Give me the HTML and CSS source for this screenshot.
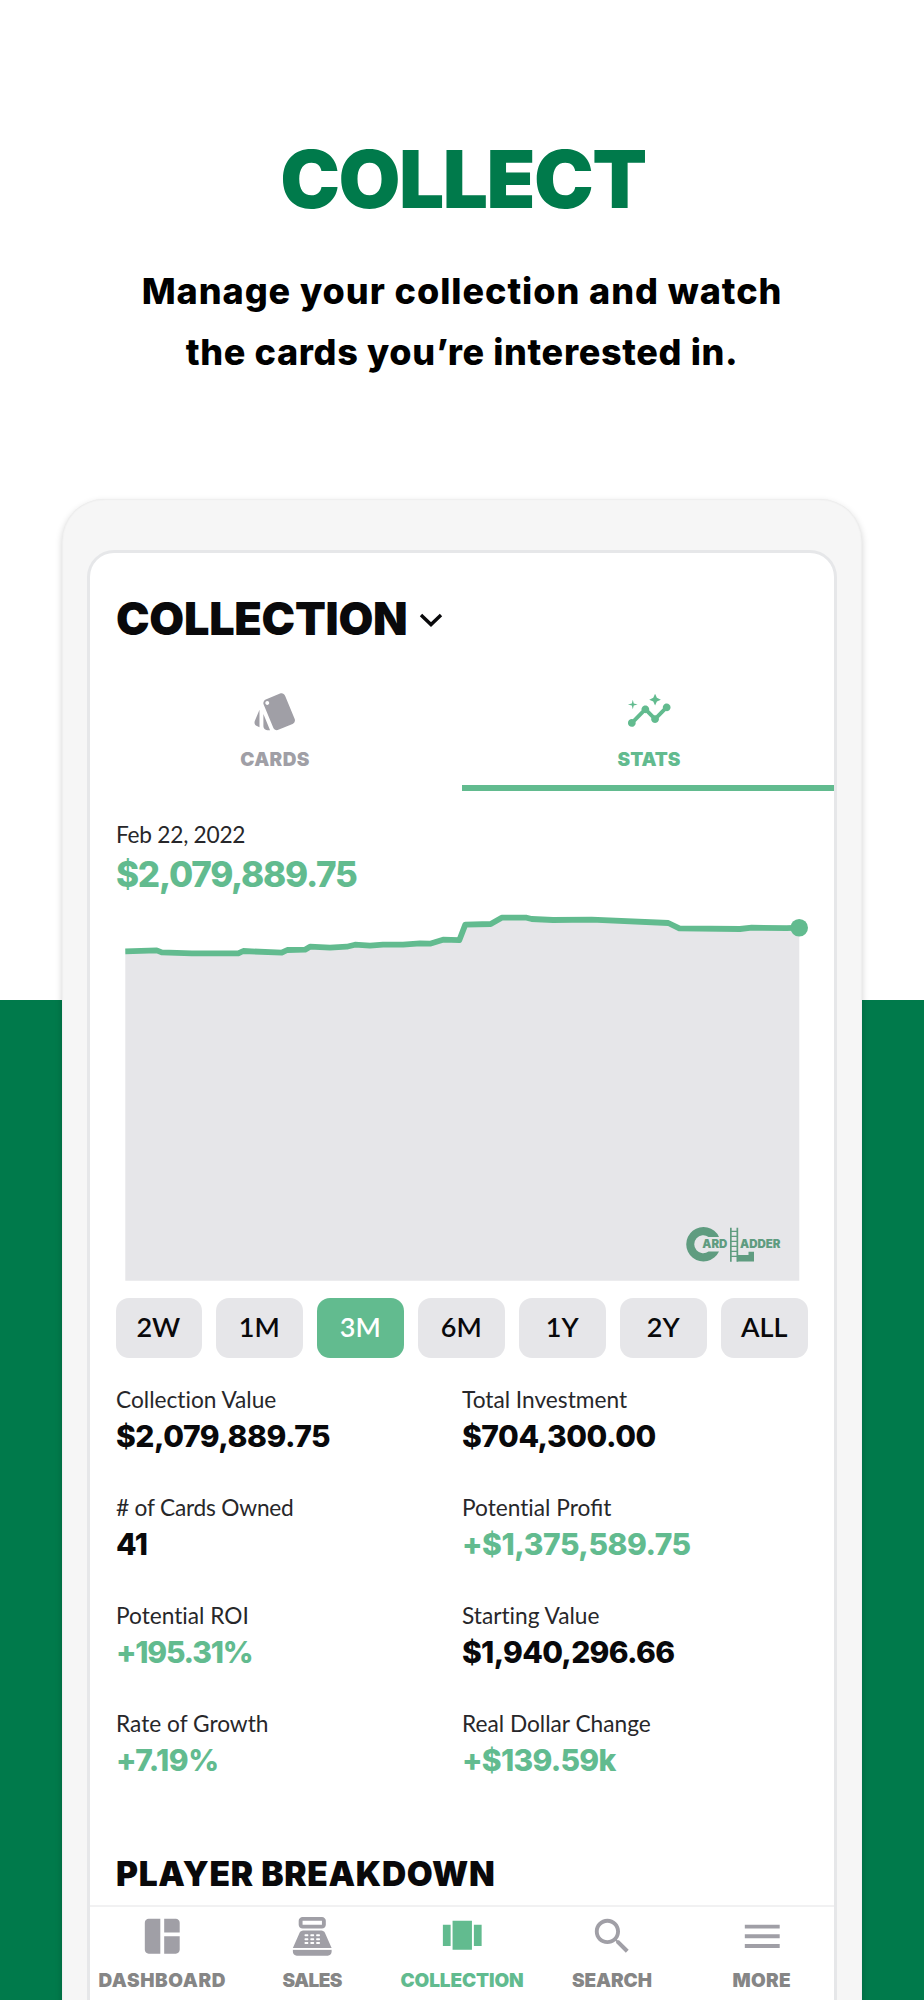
FILE: index.html
```html
<!DOCTYPE html>
<html lang="en">
<head>
<meta charset="utf-8">
<title>Collect</title>
<link rel="stylesheet" href="styles.css">
</head>
<body>
<main class="page">
  <header class="hero">
    <h1 class="hero-title">COLLECT</h1>
    <p class="hero-text"><span class="line-one">Manage your collection and watch</span><br><span class="line-two">the cards you’re interested in.</span></p>
  </header>

  <div class="device">
    <div class="screen">
      <div class="title">
        <h2 class="title-text">COLLECTION</h2>
        <svg class="chevron" viewBox="0 0 24 14"><path d="M2 2l10 9.6L22 2" fill="none" stroke="currentColor" stroke-width="3.4"/></svg>
      </div>

      <div class="tabs">
        <div class="tab cards">
          <svg class="icon" viewBox="0 0 24 24"><path d="M2.53 19.65l1.34.56v-9.03l-2.43 5.86c-.41 1.02.08 2.19 1.09 2.61zm19.5-3.7L17.07 3.98c-.31-.75-1.04-1.21-1.81-1.23-.26 0-.53.04-.79.15L7.1 5.95c-.75.31-1.21 1.03-1.23 1.8-.01.27.04.54.15.8l4.96 11.97c.31.76 1.05 1.22 1.83 1.23.26 0 .52-.05.77-.15l7.36-3.05c1.02-.42 1.51-1.59 1.09-2.6zM7.88 8.75c-.55 0-1-.45-1-1s.45-1 1-1 1 .45 1 1-.45 1-1 1zm-2 11c0 1.1.9 2 2 2h1.45l-3.45-8.34v6.34z"/></svg>
          <span class="tab-label spaced">CARDS</span>
        </div>
        <div class="tab active">
          <svg class="icon" viewBox="0 0 24 24"><path d="M21 8c-1.45 0-2.26 1.44-1.93 2.51l-3.55 3.56c-.3-.09-.74-.09-1.04 0l-2.55-2.55C12.27 10.45 11.46 9 10 9c-1.45 0-2.27 1.44-1.93 2.52l-4.56 4.55C2.44 15.74 1 16.55 1 18c0 1.1.9 2 2 2 1.45 0 2.26-1.44 1.93-2.51l4.55-4.56c.3.09.74.09 1.04 0l2.55 2.55C12.73 16.55 13.54 18 15 18c1.45 0 2.27-1.44 1.93-2.52l3.56-3.55C21.56 12.26 23 11.45 23 10c0-1.1-.9-2-2-2z"/><path d="M15 9l.94-2.07L18 6l-2.06-.93L15 3l-.92 2.07L12 6l2.08.93zM3.5 11L4 9l2-.5L4 8l-.5-2L3 8l-2 .5L3 9z"/></svg>
          <span class="tab-label">STATS</span>
        </div>
      </div>

      <div class="date">Feb 22, 2022</div>
      <div class="total">$2,079,889.75</div>

      <svg class="chart" viewBox="116 892.3 694 389.5">
        <path fill="#e6e6e9" d="M125.3 951.7L156.7 950.7 161.7 952.7 191.7 953.7H238.3L243.3 951.3 281.7 953 287.3 950.3 305 950 310 947 330 948 346.7 947 355 945 370 946 383 945H403L420 943.7 430 944 443 940 459.3 940.5 465.3 924.9 490.7 924.3 501.7 918H526.7L531.7 919.3 553 920.3 591.7 920 668.3 923.3 679.3 928.7 740 929.3 751.7 928 786.7 928.5 799.3 928V1281H125.3z"/>
        <path fill="none" stroke="#62bb8f" stroke-width="5.8" stroke-linejoin="round" d="M125.3 951.7L156.7 950.7 161.7 952.7 191.7 953.7H238.3L243.3 951.3 281.7 953 287.3 950.3 305 950 310 947 330 948 346.7 947 355 945 370 946 383 945H403L420 943.7 430 944 443 940 459.3 940.5 465.3 924.9 490.7 924.3 501.7 918H526.7L531.7 919.3 553 920.3 591.7 920 668.3 923.3 679.3 928.7 740 929.3 751.7 928 786.7 928.5 799.3 928"/>
        <circle cx="799.2" cy="928" r="8.8" fill="#62bb8f"/>
        <g fill="#5f9c80">
          <path d="M719 1237.2a17.2 17.2 0 1 0 0 14.6H708.500a9 9 0 1 1 0-14.6z"/>
          <path d="M730 1228h1.700v34H730zM736.500 1228h1.700v34h-1.700z"/>
          <path d="M731 1231h6v1.200h-6zM731 1236h6v1.200h-6zM731 1241h6v1.200h-6zM731 1246h6v1.200h-6zM731 1251h6v1.200h-6zM731 1256h6v1.200h-6z"/>
          <path d="M737.500 1255.300h11v-3.300h5.500v9.900h-16.500z"/>
          <text class="logo-text" x="702.300" y="1248.800" textLength="25" lengthAdjust="spacingAndGlyphs">ARD</text>
          <text class="logo-text" x="740" y="1248.800" textLength="40.500" lengthAdjust="spacingAndGlyphs">ADDER</text>
        </g>
      </svg>

      <div class="ranges">
        <button class="range">2W</button>
        <button class="range">1M</button>
        <button class="range selected">3M</button>
        <button class="range">6M</button>
        <button class="range">1Y</button>
        <button class="range">2Y</button>
        <button class="range">ALL</button>
      </div>

      <div class="stats">
        <div class="stat"><div class="label">Collection Value</div><div class="value">$2,079,889.75</div></div>
        <div class="stat"><div class="label">Total Investment</div><div class="value">$704,300.00</div></div>
        <div class="stat"><div class="label owned"># of Cards Owned</div><div class="value">41</div></div>
        <div class="stat"><div class="label">Potential Pro<span class="ligature">fi</span>t</div><div class="value gain">+$1,375,589.75</div></div>
        <div class="stat"><div class="label">Potential ROI</div><div class="value gain tight">+195.31%</div></div>
        <div class="stat"><div class="label">Starting Value</div><div class="value snug">$1,940,296.66</div></div>
        <div class="stat"><div class="label">Rate of Growth</div><div class="value gain">+7.19%</div></div>
        <div class="stat"><div class="label">Real Dollar Change</div><div class="value gain snug">+$139.59k</div></div>
      </div>

      <h3 class="section-title">PLAYER BREAKDOWN</h3>

      <nav class="nav">
        <a class="nav-item">
          <svg class="icon" viewBox="0 0 24 24"><path d="M11 21H5c-1.100 0-2-.9-2-2V5c0-1.100.9-2 2-2h6v18zm2 0h6c1.100 0 2-.9 2-2v-7h-8v9zm8-11V5c0-1.100-.9-2-2-2h-6v7h8z"/></svg>
          <span class="nav-label wide">DASHBOARD</span>
        </a>
        <a class="nav-item">
          <svg class="icon" viewBox="0 0 24 24"><path d="M17 2H7c-1.100 0-2 .9-2 2v2c0 1.100.9 2 2 2h10c1.100 0 2-.9 2-2V4c0-1.100-.9-2-2-2zm0 4H7V4h10v2zm3 16H4c-1.100 0-2-.9-2-2v-1h20v1c0 1.100-.9 2-2 2zM18.530 10.190C18.210 9.470 17.490 9 16.700 9H7.300c-.79 0-1.510.47-1.830 1.190L2 18h20l-3.470-7.810zM9.500 16h-1c-.28 0-.5-.22-.5-.5s.22-.5.5-.5h1c.28 0 .5.22.5.5s-.22.5-.5.5zm0-2h-1c-.28 0-.5-.22-.5-.5s.22-.5.5-.5h1c.28 0 .5.22.5.5s-.22.5-.5.5zm0-2h-1c-.28 0-.5-.22-.5-.5s.22-.5.5-.5h1c.28 0 .5.22.5.5s-.22.5-.5.5zm3 4h-1c-.28 0-.5-.22-.5-.5s.22-.5.5-.5h1c.28 0 .5.22.5.5s-.22.5-.5.5zm0-2h-1c-.28 0-.5-.22-.5-.5s.22-.5.5-.5h1c.28 0 .5.22.5.5s-.22.5-.5.5zm0-2h-1c-.28 0-.5-.22-.5-.5s.22-.5.5-.5h1c.28 0 .5.22.5.5s-.22.5-.5.5zm3 4h-1c-.28 0-.5-.22-.5-.5s.22-.5.5-.5h1c.28 0 .5.22.5.5s-.22.5-.5.5zm0-2h-1c-.28 0-.5-.22-.5-.5s.22-.5.5-.5h1c.28 0 .5.22.5.5s-.22.5-.5.5zm0-2h-1c-.28 0-.5-.22-.5-.5s.22-.5.5-.5h1c.28 0 .5.22.5.5s-.22.5-.5.5z"/><path d="M2 18.100h20v.7H2z" fill="#fff"/></svg>
          <span class="nav-label narrow">SALES</span>
        </a>
        <a class="nav-item current">
          <svg class="icon" viewBox="0 0 24 24"><path d="M7 19h10V4H7v15zm-5-2h4V6H2v11zM18 6v11h4V6h-4z"/></svg>
          <span class="nav-label">COLLECTION</span>
        </a>
        <a class="nav-item">
          <svg class="icon thin" viewBox="0 0 24 24"><path d="M15.500 14h-.79l-.28-.27C15.410 12.590 16 11.110 16 9.500 16 5.910 13.090 3 9.500 3S3 5.910 3 9.500 5.910 16 9.500 16c1.610 0 3.090-.59 4.230-1.570l.27.28v.79l5 4.990L20.490 19l-4.990-5zm-6 0C7.010 14 5 11.990 5 9.500S7.010 5 9.500 5 14 7.010 14 9.500 11.990 14 9.500 14z"/></svg>
          <span class="nav-label">SEARCH</span>
        </a>
        <a class="nav-item">
          <svg class="icon" viewBox="0 0 24 24"><path d="M3 18h18v-2H3v2zm0-5h18v-2H3v2zm0-7v2h18V6H3z"/></svg>
          <span class="nav-label spaced">MORE</span>
        </a>
      </nav>
    </div>
  </div>
</main>
</body>
</html>
```

FILE: styles.css
```css
* { box-sizing: border-box; }

body {
  margin: 0;
  font-family: Inter, "Liberation Sans", sans-serif;
  color: #09090b;
}

h1, h2, h3, p { margin: 0; }

.page {
  width: 924px;
  height: 2000px;
  overflow: hidden;
  padding-top: 139px;
  background: linear-gradient(#fff 1000px, #007a4b 1000px);
}

.hero { text-align: center; }

.hero-title {
  font-size: 80px;
  font-weight: 900;
  line-height: 80px;
  letter-spacing: -1.5px;
  color: #007a4b;
  padding-left: 2px;
}

.hero-text {
  margin-top: 42px;
  font-size: 36px;
  font-weight: 800;
  line-height: 61px;
  color: #000;
}

.line-one { letter-spacing: 0.95px; }
.line-two { letter-spacing: 0.65px; }

.device {
  width: 800px;
  height: 1600px;
  margin: 116px auto 0;
  padding: 51px 25px 0;
  border-radius: 42px 42px 0 0;
  background: #f6f6f6;
  box-shadow: 0 3px 7px rgba(0, 0, 0, 0.18), inset 0 0 2px #dcdcdc;
}

.screen {
  height: 1549px;
  padding-top: 43px;
  border: solid #e6e7e9;
  border-width: 3px 3px 0;
  border-radius: 27px 27px 0 0;
  background: #fff;
}

.title {
  display: flex;
  align-items: center;
  gap: 12px;
  padding-left: 26px;
}

.title-text {
  font-size: 45px;
  font-weight: 900;
  line-height: 45px;
  letter-spacing: -0.28px;
}

.chevron { width: 24px; height: 14px; margin-top: 2px; }

.icon { width: 46.5px; height: 46.5px; fill: currentColor; display: block; }

.tabs {
  display: grid;
  grid-template-columns: 1fr 1fr;
  margin-top: 47px;
}

.tab {
  display: flex;
  flex-direction: column;
  align-items: center;
  gap: 15px;
  height: 103px;
  padding-left: 2px;
  border-bottom: 6px solid transparent;
  color: #a09fa6;
}

.tab.cards { padding: 0 2px 0 0; }

.tab.active { color: #62bb8f; border-color: #62bb8f; }

.tab-label, .nav-label {
  font-size: 19px;
  font-weight: 900;
  line-height: 20px;
}

.nav-label { letter-spacing: -0.1px; }
.spaced { letter-spacing: 0.35px; }
.wide { letter-spacing: 0.6px; }
.narrow { letter-spacing: -0.6px; }

.date, .label {
  font-family: Lato, "Open Sans", sans-serif;
  font-size: 22.7px;
  line-height: 28px;
  color: #27272a;
  font-variant-ligatures: none;
}

.ligature { font-variant-ligatures: common-ligatures; }
.owned { letter-spacing: -0.2px; }

.date { margin: 30px 0 0 26px; letter-spacing: -0.25px; }

.total {
  margin: 7px 0 0 26px;
  font-size: 35px;
  font-weight: 800;
  line-height: 36px;
  letter-spacing: -1.24px;
  color: #62bb8f;
}

.chart { display: block; width: 694px; height: 389.5px; margin-left: 25.5px; }

.logo-text { font-size: 11.4px; font-weight: 900; }

.ranges {
  display: grid;
  grid-template-columns: repeat(7, 1fr);
  gap: 14.4px;
  margin: 16px 26px 0 25.5px;
}

.range {
  height: 60.5px;
  padding: 0 1px 2px 0;
  border: 0;
  border-radius: 13px;
  background: #e6e6e9;
  color: #09090b;
  font: 600 27px Lato, "Open Sans", sans-serif;
}

.range.selected { background: #62bb8f; color: #fff; }

.stats {
  display: grid;
  grid-template-columns: 346px 1fr;
  row-gap: 41px;
  margin: 28px 0 0 26px;
}

.value {
  margin-top: 6px;
  margin-bottom: 1px;
  font-size: 30px;
  font-weight: 800;
  line-height: 32px;
  letter-spacing: -0.45px;
}

.gain { color: #62bb8f; }
.snug { letter-spacing: -0.7px; }
.tight { letter-spacing: -1.25px; }

.section-title {
  margin: 79px 0 0 26px;
  font-size: 33.5px;
  font-weight: 900;
  line-height: 36px;
  letter-spacing: 0.69px;
}

.nav {
  display: grid;
  grid-template-columns: repeat(5, 149.9px);
  justify-content: center;
  margin-top: 13px;
  padding-top: 5.5px;
  border-top: 2.5px solid #f1f1f2;
}

.nav-item {
  display: flex;
  flex-direction: column;
  align-items: center;
  gap: 12px;
  color: #a09fa6;
}

.nav-item .nav-label { color: #868686; }
.nav-item.current, .nav-item.current .nav-label { color: #62bb8f; }
```
